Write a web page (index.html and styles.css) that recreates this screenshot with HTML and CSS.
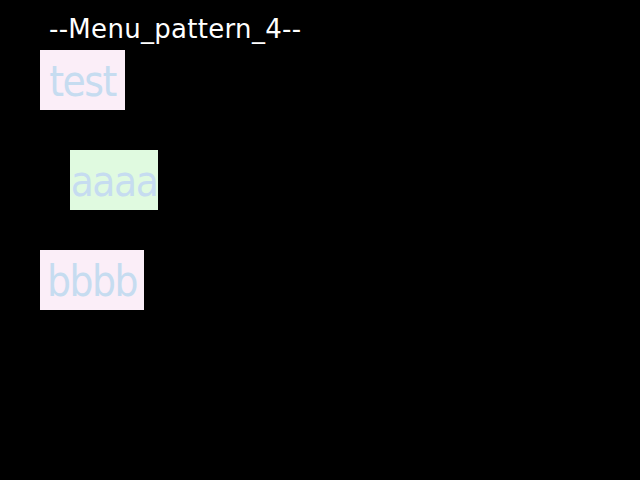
FILE: index.html
```html
<!DOCTYPE html>
<html>
<head>
<meta charset="utf-8">
<link rel="stylesheet" href="styles.css">
</head>
<body>
<div class="page">
  <div class="title">--Menu_pattern_4--</div>
  <ul class="menu">
    <li class="item item-a"><span class="label pink w-test">test</span></li>
    <li class="item item-b"><span class="label green w-aaaa">aaaa</span></li>
    <li class="item item-a"><span class="label pink w-bbbb">bbbb</span></li>
  </ul>
</div>
</body>
</html>
```
FILE: styles.css
```css
html, body {
  margin: 0;
  padding: 0;
  background: #000;
  width: 640px;
  height: 480px;
  overflow: hidden;
}
.page {
  display: flex;
  flex-direction: column;
}
.title {
  height: 50px;
  padding-left: 49px;
  color: #fff;
  font-family: "DejaVu Sans", sans-serif;
  font-size: 26px;
  line-height: 58px;
  letter-spacing: 0.3px;
  white-space: nowrap;
}
.menu {
  list-style: none;
  margin: 0;
  padding: 0;
  display: flex;
  flex-direction: column;
  gap: 40px;
}
.item {
  display: flex;
  height: 60px;
}
.item-a { padding-left: 40px; }
.item-b { padding-left: 70px; }
.label {
  display: flex;
  align-items: flex-end;
  justify-content: center;
  height: 60px;
  font-family: "DejaVu Sans Condensed", "DejaVu Sans", sans-serif;
  font-size: 42px;
  line-height: 1;
  letter-spacing: -1.5px;
  color: #c6dcf0;
  padding-bottom: 7px;
  box-sizing: border-box;
  white-space: nowrap;
}
.w-test { width: 85px; }
.w-aaaa { width: 88px; }
.w-bbbb { width: 104px; }
.pink { background: #fbeef8; }
.green { background: #e0fae0; }
```
